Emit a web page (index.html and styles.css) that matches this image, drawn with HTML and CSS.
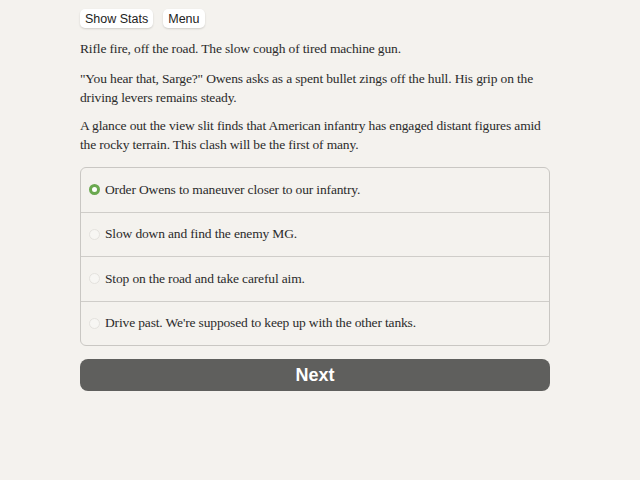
FILE: index.html
```html
<!DOCTYPE html>
<html lang="en">
<head>
    <meta charset="UTF-8">
    <title>Tank Commander</title>
    <link rel="stylesheet" href="styles.css">
</head>
<body>
    <div class="container">
        <div class="buttons">
            <button class="spacedLink">Show Stats</button>
            <button class="spacedLink">Menu</button>
        </div>

        <div class="text">
            <p>Rifle fire, off the road. The slow cough of tired machine gun.</p>
            <p>"You hear that, Sarge?" Owens asks as a spent bullet zings off the hull. His grip on the driving levers remains steady.</p>
            <p class="last">A glance out the view slit finds that American infantry has engaged distant figures amid the rocky terrain. This clash will be the first of many.</p>
        </div>

        <form class="choice">
            <label class="option selected"><span class="radio"></span>Order Owens to maneuver closer to our infantry.</label>
            <label class="option"><span class="radio"></span>Slow down and find the enemy MG.</label>
            <label class="option"><span class="radio"></span>Stop on the road and take careful aim.</label>
            <label class="option"><span class="radio"></span>Drive past. We're supposed to keep up with the other tanks.</label>
        </form>

        <button class="next">Next</button>
    </div>
</body>
</html>
```

FILE: styles.css
```css
body {
    margin: 0;
    background-color: #f4f2ee;
    color: #2b2b2b;
    font-family: "Liberation Serif", serif;
    font-size: 13.5px;
    letter-spacing: -0.15px;
}

.container {
    width: 470px;
    margin-left: 80px;
    padding-top: 9px;
}

.buttons {
    display: flex;
    gap: 10px;
}

.spacedLink {
    font-family: "Liberation Sans", Arial, sans-serif;
    font-size: 12.5px;
    letter-spacing: 0;
    color: #222;
    background: #fff;
    border: none;
    border-radius: 5px;
    box-shadow: 0 1px 2px rgba(0, 0, 0, 0.15);
    height: 19px;
    padding: 0 5px;
}

.text p {
    margin: 11px 0 0;
    line-height: 19px;
}

.text p.last {
    margin-top: 9px;
}

.choice {
    margin-top: 13px;
    border: 1px solid #c9c7c3;
    border-radius: 6px;
}

.option {
    display: flex;
    align-items: center;
    height: 43.5px;
    padding-left: 8px;
    border-top: 1px solid #cfcdc9;
}

.option:first-child {
    border-top: none;
}

.radio {
    width: 9px;
    height: 9px;
    border-radius: 50%;
    background: #f7f6f3;
    border: 1px solid #e4e2de;
    margin-right: 5px;
}

.selected .radio {
    width: 5px;
    height: 5px;
    background: #fff;
    border: 3px solid #6aa84f;
}

.next {
    display: block;
    width: 100%;
    height: 32px;
    margin-top: 13px;
    border: none;
    border-radius: 8px;
    background: #5f5f5d;
    color: #fff;
    font-family: "Liberation Sans", Arial, sans-serif;
    font-weight: bold;
    font-size: 18px;
    letter-spacing: 0;
}
```
